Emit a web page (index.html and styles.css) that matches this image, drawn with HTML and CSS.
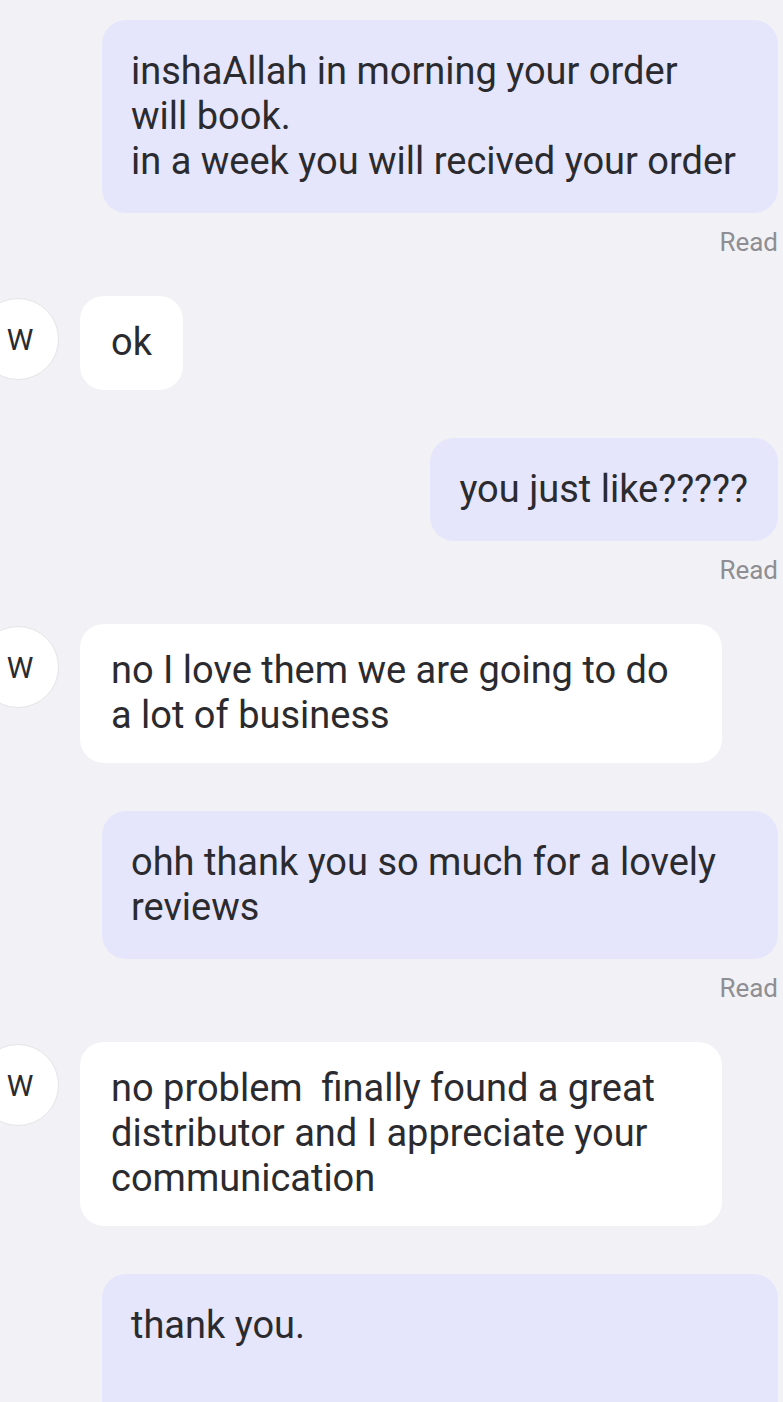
FILE: index.html
```html
<!DOCTYPE html>
<html lang="en">
<head>
    <meta charset="UTF-8">
    <meta name="viewport" content="width=device-width, initial-scale=1.0">
    <title>Chat</title>
    <link rel="stylesheet" href="styles.css">
</head>
<body>
    <div class="chat">
        <div class="msg sent">
            <div class="bubble wide">inshaAllah in morning your order<br>will book.<br>in a week you will recived your order</div>
            <div class="status">Read</div>
        </div>
        <div class="msg received">
            <div class="avatar">W</div>
            <div class="bubble">ok</div>
        </div>
        <div class="msg sent">
            <div class="bubble">you just like?????</div>
            <div class="status">Read</div>
        </div>
        <div class="msg received">
            <div class="avatar">W</div>
            <div class="bubble wide">no I love them we are going to do<br>a lot of business</div>
        </div>
        <div class="msg sent">
            <div class="bubble wide">ohh thank you so much for a lovely<br>reviews</div>
            <div class="status">Read</div>
        </div>
        <div class="msg received">
            <div class="avatar">W</div>
            <div class="bubble wide">no problem&nbsp; finally found a great<br>distributor and I appreciate your<br>communication</div>
        </div>
        <div class="msg sent">
            <div class="bubble wide last">thank you.</div>
        </div>
    </div>
</body>
</html>
```

FILE: styles.css
```css
body {
    margin: 0;
    background-color: #f2f2f6;
    font-family: Roboto, "Noto Sans", sans-serif;
    color: #2b2b2f;
    overflow: hidden;
}
.chat {
    display: flex;
    flex-direction: column;
    padding: 20px 5px 0 0;
}
.msg {
    display: flex;
}
.bubble {
    font-size: 38px;
    line-height: 45px;
    border-radius: 24px;
    white-space: nowrap;
}
.msg.sent {
    flex-direction: column;
    align-items: flex-end;
}
.sent .bubble {
    background-color: #e5e6fb;
    padding: 29px 30px 29px 29px;
}
.sent .bubble.wide {
    width: 617px;
}
.sent .bubble.last {
    min-height: 120px;
}
.status {
    font-size: 26px;
    line-height: 28px;
    color: #8e8e93;
    margin-top: 15px;
    margin-bottom: 40px;
}
.msg.received {
    align-items: flex-start;
    margin-bottom: 48px;
}
.avatar {
    width: 82px;
    height: 82px;
    margin: 2px 0 0 -23px;
    border: 1px solid #e4e4e8;
    border-radius: 50%;
    background-color: #fff;
    display: flex;
    align-items: center;
    justify-content: center;
    padding-left: 4px;
    box-sizing: border-box;
    font-size: 30px;
    color: #2b2b2f;
    flex-shrink: 0;
}
.received .bubble {
    background-color: #fff;
    margin-left: 21px;
    padding: 24px 31px 25px 31px;
}
.received .bubble.wide {
    width: 580px;
}
```
